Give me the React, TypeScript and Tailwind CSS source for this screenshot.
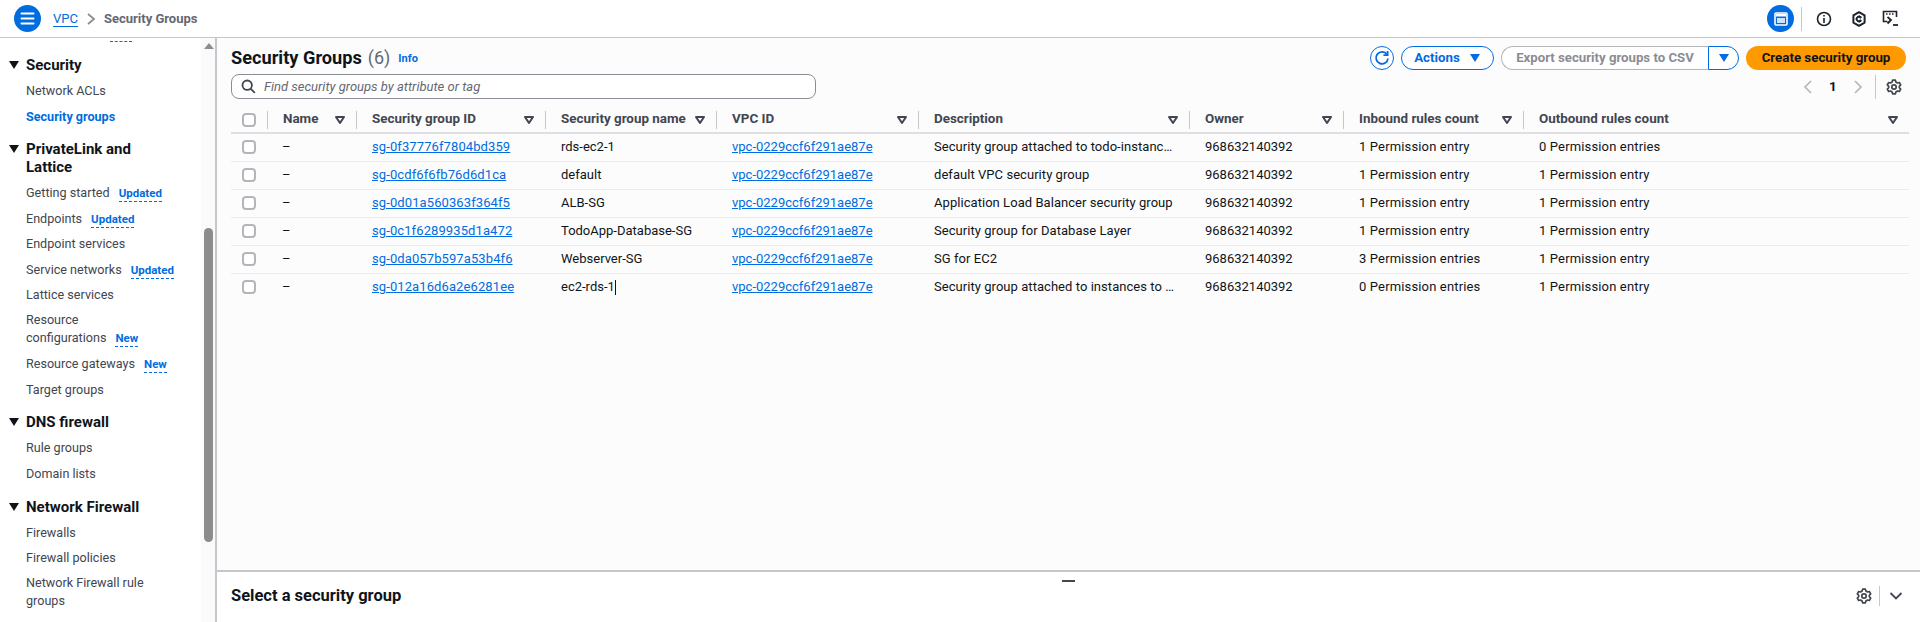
import React from "react";

const cols = "grid-cols-[36px_89px_189px_171px_202px_271px_154px_180px_1fr]";

const rows = [
  ["sg-0f37776f7804bd359", "rds-ec2-1", "Security group attached to todo-instanc…", "1 Permission entry", "0 Permission entries"],
  ["sg-0cdf6f6fb76d6d1ca", "default", "default VPC security group", "1 Permission entry", "1 Permission entry"],
  ["sg-0d01a560363f364f5", "ALB-SG", "Application Load Balancer security group", "1 Permission entry", "1 Permission entry"],
  ["sg-0c1f6289935d1a472", "TodoApp-Database-SG", "Security group for Database Layer", "1 Permission entry", "1 Permission entry"],
  ["sg-0da057b597a53b4f6", "Webserver-SG", "SG for EC2", "3 Permission entries", "1 Permission entry"],
  ["sg-012a16d6a2e6281ee", "ec2-rds-1", "Security group attached to instances to …", "0 Permission entries", "1 Permission entry"],
];

function Caret({ className = "" }: { className?: string }) {
  return (
    <svg width="12" height="10" viewBox="0 0 12 10" className={className}>
      <path d="M1 1h10L6 9z" fill="currentColor" />
    </svg>
  );
}

function FilterCaret() {
  return (
    <svg width="12" height="10" viewBox="0 0 12 10" className="text-[#424650] shrink-0">
      <path d="M2 2h8L6 8z" fill="none" stroke="currentColor" strokeWidth="2" strokeLinejoin="round" />
    </svg>
  );
}

function Gear() {
  return (
    <svg width="16" height="16" viewBox="0 0 16 16" fill="none" stroke="#424650" strokeWidth="1.7" strokeLinejoin="round">
      <circle cx="8" cy="8" r="2.2" />
      <path d="M6.6 1.2h2.8l.5 1.9 1.5.9 1.9-.5 1.4 2.4-1.4 1.4v1.4l1.4 1.4-1.4 2.4-1.9-.5-1.5.9-.5 1.9H6.6l-.5-1.9-1.5-.9-1.9.5-1.4-2.4 1.4-1.4V7.3L1.3 5.9l1.4-2.4 1.9.5 1.5-.9z" />
    </svg>
  );
}

function Check() {
  return <span className="block w-[14px] h-[14px] rounded-[4px] border-2 border-[#b4b4bb] bg-white" />;
}

function NavHead({ children, className = "" }: { children: React.ReactNode; className?: string }) {
  return (
    <div className={`flex text-[15px] leading-[18px] font-bold text-[#0f141a] pb-[1px] ${className}`}>
      <Caret className="mt-[4px] ml-[8px] mr-[6px] shrink-0 text-[#0f141a]" />
      <span className="w-[125px]">{children}</span>
    </div>
  );
}

function NavItem({ children, badge, active, className = "" }: { children: React.ReactNode; badge?: string; active?: boolean; className?: string }) {
  return (
    <div className={`pl-[26px] pr-[20px] text-[12.6px] leading-[18px] mt-[7.3px] ${active ? "font-bold text-[#006ce0]" : "text-[#424650]"} ${className}`}>
      {children}
      {badge && (
        <span className="ml-[9px] text-[11.5px] font-bold text-[#006ce0] border-b border-dashed border-[#006ce0] inline-block leading-[15px]">
          {badge}
        </span>
      )}
    </div>
  );
}

function Header({ children }: { children?: React.ReactNode }) {
  return (
    <div className="flex items-center justify-between pl-[15px] pr-[10px] text-[13.4px] font-bold text-[#424650] border-l border-[#c6c6cd] h-[18px] whitespace-nowrap">
      <span>{children}</span>
      <FilterCaret />
    </div>
  );
}

export default function App() {
  return (
    <div className="h-screen overflow-hidden flex flex-col bg-white text-[#0f141a] font-['Roboto','Noto_Sans',sans-serif]">
      <header className="h-[38px] shrink-0 border-b border-[#c6c6cd] flex items-center pl-[14px] pr-[21px]">
        <button className="w-[27px] h-[27px] rounded-full bg-[#006ce0] flex items-center justify-center">
          <svg width="15" height="13" viewBox="0 0 15 13" stroke="white" strokeWidth="2" strokeLinecap="round">
            <path d="M1.5 1.5h12M1.5 6.5h12M1.5 11.5h12" />
          </svg>
        </button>
        <a className="ml-[12px] text-[13px] text-[#006ce0] underline underline-offset-[3px] leading-[18px]">VPC</a>
        <svg width="10" height="12" viewBox="0 0 10 12" className="ml-[8px] mr-[8px]" fill="none" stroke="#8c8c94" strokeWidth="1.8">
          <path d="M2 1l6 5-6 5" />
        </svg>
        <span className="text-[13px] font-bold text-[#656871]">Security Groups</span>
        <div className="ml-auto flex items-center">
          <button className="w-[27px] h-[27px] rounded-full bg-[#006ce0] flex items-center justify-center">
            <svg width="14" height="14" viewBox="0 0 14 14">
              <rect x="1" y="1" width="12" height="12" rx="1" fill="none" stroke="white" strokeWidth="1.6" />
              <rect x="2" y="2" width="10" height="2.5" fill="white" />
              <rect x="3" y="6" width="8" height="5" fill="#cfe2f8" />
            </svg>
          </button>
          <span className="ml-[7px] w-px h-[24px] bg-[#c6c6cd]" />
          <svg width="16" height="16" viewBox="0 0 16 16" className="ml-[14px]" fill="none" stroke="#1b232d" strokeWidth="1.6">
            <circle cx="8" cy="8" r="6.5" />
            <path d="M8 7v5M8 4v1.6" />
          </svg>
          <svg width="16" height="16" viewBox="0 0 16 16" className="ml-[19px]" fill="none" stroke="#1b232d" strokeWidth="2" strokeLinejoin="round">
            <path d="M8 1.2l5.6 3.2v7.2L8 14.8l-5.6-3.2V4.4z" />
            <path d="M10.5 6.2A3 3 0 1 0 10.5 9.8L8.2 8z" fill="#1b232d" strokeWidth="1" />
            <circle cx="7.8" cy="8" r="1.2" fill="white" stroke="none" />
          </svg>
          <svg width="17" height="17" viewBox="0 0 17 17" className="ml-[15px]" fill="none" stroke="#1b232d" strokeWidth="1.6">
            <path d="M5.5 11.5h-4v-10h13V7" />
            <path d="M4 4h1.5M7 4h1.5M10 4h1.5" strokeWidth="1.4" />
            <path d="M5.5 7l3.5 3-3.5 3.5" strokeWidth="1.8" />
            <path d="M11 15h5" strokeWidth="1.8" />
          </svg>
        </div>
      </header>

      <div className="flex-1 flex min-h-0">
        <aside className="w-[217px] shrink-0 border-r-2 border-[#c6c6cd] flex relative overflow-hidden bg-[#fafafa]">
          <nav className="w-[201px] bg-white pt-[18px] overflow-hidden">
            <NavHead>Security</NavHead>
            <NavItem>Network ACLs</NavItem>
            <NavItem active>Security groups</NavItem>
            <NavHead className="mt-[14px]">PrivateLink and Lattice</NavHead>
            <NavItem badge="Updated" className="pb-[1px]">Getting started</NavItem>
            <NavItem badge="Updated">Endpoints</NavItem>
            <NavItem>Endpoint services</NavItem>
            <NavItem badge="Updated">Service networks</NavItem>
            <NavItem>Lattice services</NavItem>
            <NavItem badge="New">Resource<br />configurations</NavItem>
            <NavItem badge="New" className="pb-[1px]">Resource gateways</NavItem>
            <NavItem>Target groups</NavItem>
            <NavHead className="mt-[14px]">DNS firewall</NavHead>
            <NavItem>Rule groups</NavItem>
            <NavItem>Domain lists</NavItem>
            <NavHead className="mt-[15px]">Network Firewall</NavHead>
            <NavItem>Firewalls</NavItem>
            <NavItem>Firewall policies</NavItem>
            <NavItem>Network Firewall rule<br />groups</NavItem>
            <NavItem>TLS inspection</NavItem>
          </nav>
          <span className="absolute left-[110px] top-[3px] w-[22px] border-t border-dashed border-[#006ce0]" />
          <span className="absolute left-[204px] top-[5px] w-0 h-0 border-x-[5px] border-x-transparent border-b-[6px] border-b-[#8c8c94]" />
          <span className="absolute left-[204px] top-[190px] w-[9px] h-[314px] rounded-full bg-[#8c8c8c]" />
        </aside>

        <main className="flex-1 min-w-0 flex flex-col">
          <section className="flex-1 min-h-0 bg-[#fcfcfc] pl-[14px] pr-[11px] pt-[8px]">
            <div className="flex items-center h-[24px] pr-[3px]">
              <h1 className="text-[18.2px] font-bold leading-[24px] text-[#0f141a]">Security Groups</h1>
              <span className="ml-[6px] text-[18px] text-[#656871] leading-[24px]">(6)</span>
              <span className="ml-[8px] mt-[2px] text-[11px] font-bold text-[#006ce0]">Info</span>
              <div className="ml-auto flex items-center">
                <button className="w-[24px] h-[24px] rounded-full border border-[#006ce0] bg-white flex items-center justify-center">
                  <svg width="16" height="16" viewBox="0 0 16 16" fill="none" stroke="#006ce0" strokeWidth="1.8">
                    <path d="M13 4.5A6 6 0 1 0 14 8.5" />
                    <path d="M13.6 1v4.2H9.4" />
                  </svg>
                </button>
                <button className="ml-[7px] w-[93px] h-[24px] rounded-full border border-[#006ce0] bg-white flex items-center justify-center gap-[9px] text-[13.3px] font-bold text-[#006ce0]">
                  Actions
                  <Caret />
                </button>
                <button className="ml-[7px] w-[207px] h-[24px] rounded-l-full border border-[#b4b4bb] border-r-0 bg-white text-[13.2px] font-bold text-[#8c8c94] whitespace-nowrap">
                  Export security groups to CSV
                </button>
                <button className="w-[31px] h-[24px] rounded-r-full border border-[#006ce0] bg-white flex items-center justify-center text-[#006ce0]">
                  <Caret />
                </button>
                <button className="ml-[7px] w-[160px] h-[24px] rounded-full bg-[#ff9900] text-[13.3px] font-bold text-[#0f141a] whitespace-nowrap">
                  Create security group
                </button>
              </div>
            </div>
            <div className="flex items-center h-[25px] mt-[4px]">
              <div className="w-[585px] h-[25px] rounded-[8px] border border-[#8c8c94] bg-white flex items-center pl-[9px]">
                <svg width="15" height="15" viewBox="0 0 15 15" fill="none" stroke="#424650" strokeWidth="1.8">
                  <circle cx="6.2" cy="6.2" r="4.7" />
                  <path d="M9.8 9.8l4 4" />
                </svg>
                <span className="ml-[8px] text-[13px] italic text-[#656871]">Find security groups by attribute or tag</span>
              </div>
              <div className="ml-auto flex items-center">
                <svg width="10" height="14" viewBox="0 0 10 14" fill="none" stroke="#b4b4bb" strokeWidth="1.6"><path d="M8 1L2 7l6 6" /></svg>
                <span className="ml-[16px] w-[8px] text-[13.5px] font-bold">1</span>
                <svg width="10" height="14" viewBox="0 0 10 14" className="ml-[16px]" fill="none" stroke="#b4b4bb" strokeWidth="1.6"><path d="M2 1l6 6-6 6" /></svg>
                <span className="ml-[12px] w-px h-[24px] bg-[#c6c6cd]" />
                <span className="ml-[10px] mr-[7px] flex"><Gear /></span>
              </div>
            </div>
            <div className={`grid ${cols} items-center h-[33px] mt-[2px] pt-[6px] border-b-2 border-[#dedee3]`}>
              <div className="pl-[11px]"><Check /></div>
              <Header>Name</Header>
              <Header>Security group ID</Header>
              <Header>Security group name</Header>
              <Header>VPC ID</Header>
              <Header>Description</Header>
              <Header>Owner</Header>
              <Header>Inbound rules count</Header>
              <Header>Outbound rules count</Header>
            </div>
            {rows.map((r, i) => (
              <div key={r[0]} className={`grid ${cols} items-center h-[28px] pb-[2px] text-[13px] whitespace-nowrap ${i < 5 ? "border-b border-[#ebebf0]" : ""}`}>
                <div className="pl-[11px]"><Check /></div>
                <div className="pl-[15px]">–</div>
                <a className="pl-[16px] text-[#006ce0] underline tracking-[0.1px]">{r[0]}</a>
                <div className="pl-[16px]">
                  {r[1]}
                  {i === 5 && <span className="inline-block w-px h-[15px] bg-[#0f141a] align-middle" />}
                </div>
                <a className="pl-[16px] text-[#006ce0] underline">vpc-0229ccf6f291ae87e</a>
                <div className="pl-[16px] tracking-[0.05px]">{r[2]}</div>
                <div className="pl-[16px]">968632140392</div>
                <div className="pl-[16px] tracking-[0.15px]">{r[3]}</div>
                <div className="pl-[16px] tracking-[0.15px]">{r[4]}</div>
              </div>
            ))}
          </section>
          <section className="h-[52px] shrink-0 bg-white border-t-2 border-[#c6c6cd] relative flex items-center pl-[14px] pr-[17px] pb-[2px]">
            <span className="absolute left-[845px] top-[8px] w-[13px] h-[2px] bg-[#424650]" />
            <h2 className="text-[16.5px] font-bold text-[#0f141a]">Select a security group</h2>
            <div className="ml-auto flex items-center">
              <Gear />
              <span className="ml-[7px] w-px h-[20px] bg-[#c6c6cd]" />
              <svg width="14" height="10" viewBox="0 0 14 10" className="ml-[9px]" fill="none" stroke="#424650" strokeWidth="1.8"><path d="M1.5 2l5.5 5.5L12.5 2" /></svg>
            </div>
          </section>
        </main>
      </div>
    </div>
  );
}
